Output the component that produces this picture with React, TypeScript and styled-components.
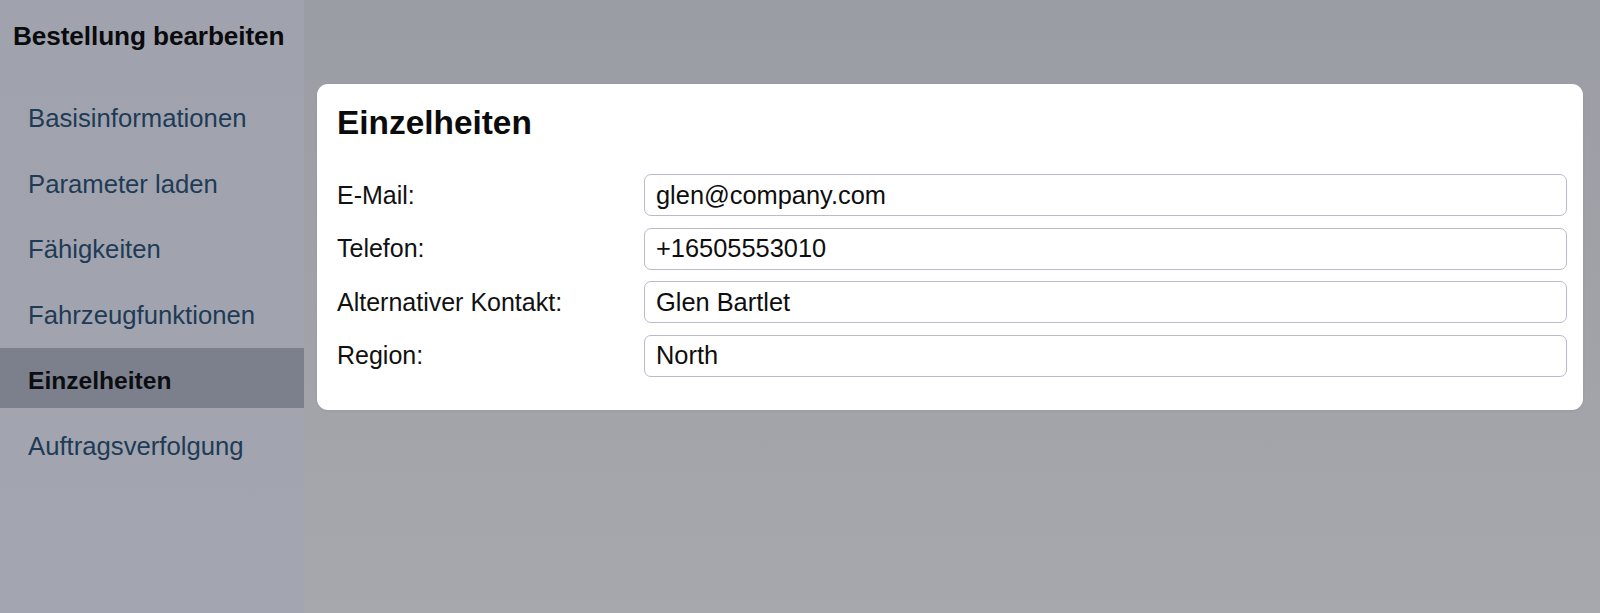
import React from "react";
import styled, { createGlobalStyle } from "styled-components";

const GlobalStyle = createGlobalStyle`
  html, body {
    margin: 0;
    padding: 0;
    height: 100%;
  }
  body {
    font-family: "Liberation Sans", Arial, Helvetica, sans-serif;
    -webkit-font-smoothing: antialiased;
  }
  #root {
    height: 100%;
  }
  * { box-sizing: border-box; }
`;

const Page = styled.div`
  display: flex;
  height: 613px;
  width: 1600px;
  overflow: hidden;
  background: linear-gradient(180deg, #9b9da4 0%, #a2a3a9 60%, #a7a8ad 100%);
`;

const Sidebar = styled.aside`
  width: 304px;
  flex: 0 0 304px;
  display: flex;
  flex-direction: column;
  background: linear-gradient(180deg, #a0a3ae 0%, #a1a4af 50%, #a3a6b0 100%);
  padding-top: 21px;
`;

const SidebarTitle = styled.h1`
  margin: 0 0 0 13px;
  font-size: 26.2px;
  line-height: 31px;
  font-weight: 700;
  color: #0b0b0d;
  letter-spacing: -0.1px;
`;

const NavList = styled.nav`
  display: flex;
  flex-direction: column;
  gap: 5.5px;
  margin-top: 34px;
`;

const NavItem = styled.div<{ $active?: boolean }>`
  height: 60px;
  display: flex;
  align-items: center;
  padding: 5px 0 0 28px;
  font-size: ${(p) => (p.$active ? "24.6px" : "25.7px")};
  font-weight: ${(p) => (p.$active ? 700 : 400)};
  color: ${(p) => (p.$active ? "#0c0d10" : "#1f3b55")};
  background: ${(p) => (p.$active ? "#7b808c" : "transparent")};
`;

const Main = styled.main`
  flex: 1;
  padding: 84px 17px 0 13px;
`;

const Card = styled.section`
  background: #ffffff;
  border-radius: 11px;
  padding: 19px 16px 33px 20px;
  box-shadow: 0 1px 3px rgba(0, 0, 0, 0.06);
`;

const CardTitle = styled.h2`
  margin: 0 0 31px 0;
  font-size: 33.4px;
  line-height: 40px;
  font-weight: 700;
  color: #0b0b0b;
`;

const FormGrid = styled.div`
  display: grid;
  grid-template-columns: 307px 1fr;
  row-gap: 11.5px;
  align-items: center;
`;

const Label = styled.label`
  font-size: 25px;
  color: #111;
  line-height: 1;
`;

const Field = styled.div`
  height: 42px;
  border: 1.5px solid #bab9cd;
  border-radius: 7px;
  display: flex;
  align-items: center;
  padding-left: 11px;
  font-size: 25.4px;
  color: #0e0e0e;
  background: #fff;
`;

const navItems = [
  "Basisinformationen",
  "Parameter laden",
  "Fähigkeiten",
  "Fahrzeugfunktionen",
  "Einzelheiten",
  "Auftragsverfolgung",
];

const fields = [
  { label: "E-Mail:", value: "glen@company.com" },
  { label: "Telefon:", value: "+16505553010" },
  { label: "Alternativer Kontakt:", value: "Glen Bartlet" },
  { label: "Region:", value: "North" },
];

export default function App() {
  return (
    <>
      <GlobalStyle />
      <Page>
        <Sidebar>
          <SidebarTitle>Bestellung bearbeiten</SidebarTitle>
          <NavList>
            {navItems.map((item) => (
              <NavItem key={item} $active={item === "Einzelheiten"}>
                {item}
              </NavItem>
            ))}
          </NavList>
        </Sidebar>
        <Main>
          <Card>
            <CardTitle>Einzelheiten</CardTitle>
            <FormGrid>
              {fields.map((f) => (
                <React.Fragment key={f.label}>
                  <Label>{f.label}</Label>
                  <Field>{f.value}</Field>
                </React.Fragment>
              ))}
            </FormGrid>
          </Card>
        </Main>
      </Page>
    </>
  );
}
